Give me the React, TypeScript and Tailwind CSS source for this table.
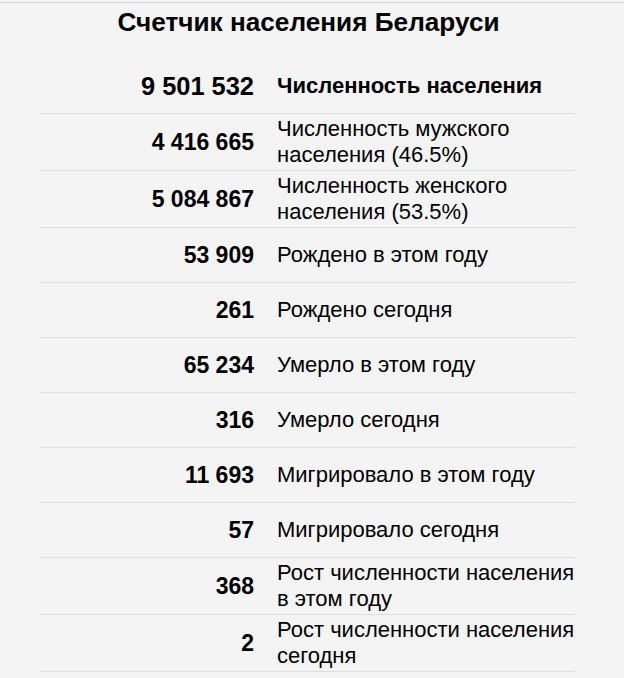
const rows = [
  { value: "9 501 532", label: "Численность населения", main: true },
  { value: "4 416 665", label: "Численность мужского населения (46.5%)" },
  { value: "5 084 867", label: "Численность женского населения (53.5%)" },
  { value: "53 909", label: "Рождено в этом году" },
  { value: "261", label: "Рождено сегодня" },
  { value: "65 234", label: "Умерло в этом году" },
  { value: "316", label: "Умерло сегодня" },
  { value: "11 693", label: "Мигрировало в этом году" },
  { value: "57", label: "Мигрировало сегодня" },
  { value: "368", label: "Рост численности населения в этом году" },
  { value: "2", label: "Рост численности населения сегодня" },
];

export default function App() {
  return (
    <div className="min-h-[678px] bg-[#f4f4f4] pt-[2px] font-['Liberation_Sans',Arial,sans-serif] text-black">
      <div className="border-t border-[#d4d4d4]">
        <h1 className="h-[56px] pt-[2px] pr-[7px] text-center text-[26.2px] font-bold leading-[34px]">
          Счетчик населения Беларуси
        </h1>
        <div className="ml-[40px] w-[535px]">
          {rows.map((row) => (
            <div
              key={row.value}
              className="flex min-h-[55px] items-center border-b border-[#dedede] py-[2px]"
            >
              <div
                className={
                  row.main
                    ? "w-[225px] shrink-0 pr-[11px] text-right text-[25.4px] font-bold"
                    : "w-[225px] shrink-0 pr-[11px] text-right text-[23px] font-bold"
                }
              >
                {row.value}
              </div>
              <div
                className={
                  row.main
                    ? "flex-1 pl-[12px] text-[22px] font-bold leading-[26px]"
                    : "flex-1 pl-[12px] text-[22px] leading-[26px]"
                }
              >
                {row.label}
              </div>
            </div>
          ))}
        </div>
      </div>
    </div>
  );
}
